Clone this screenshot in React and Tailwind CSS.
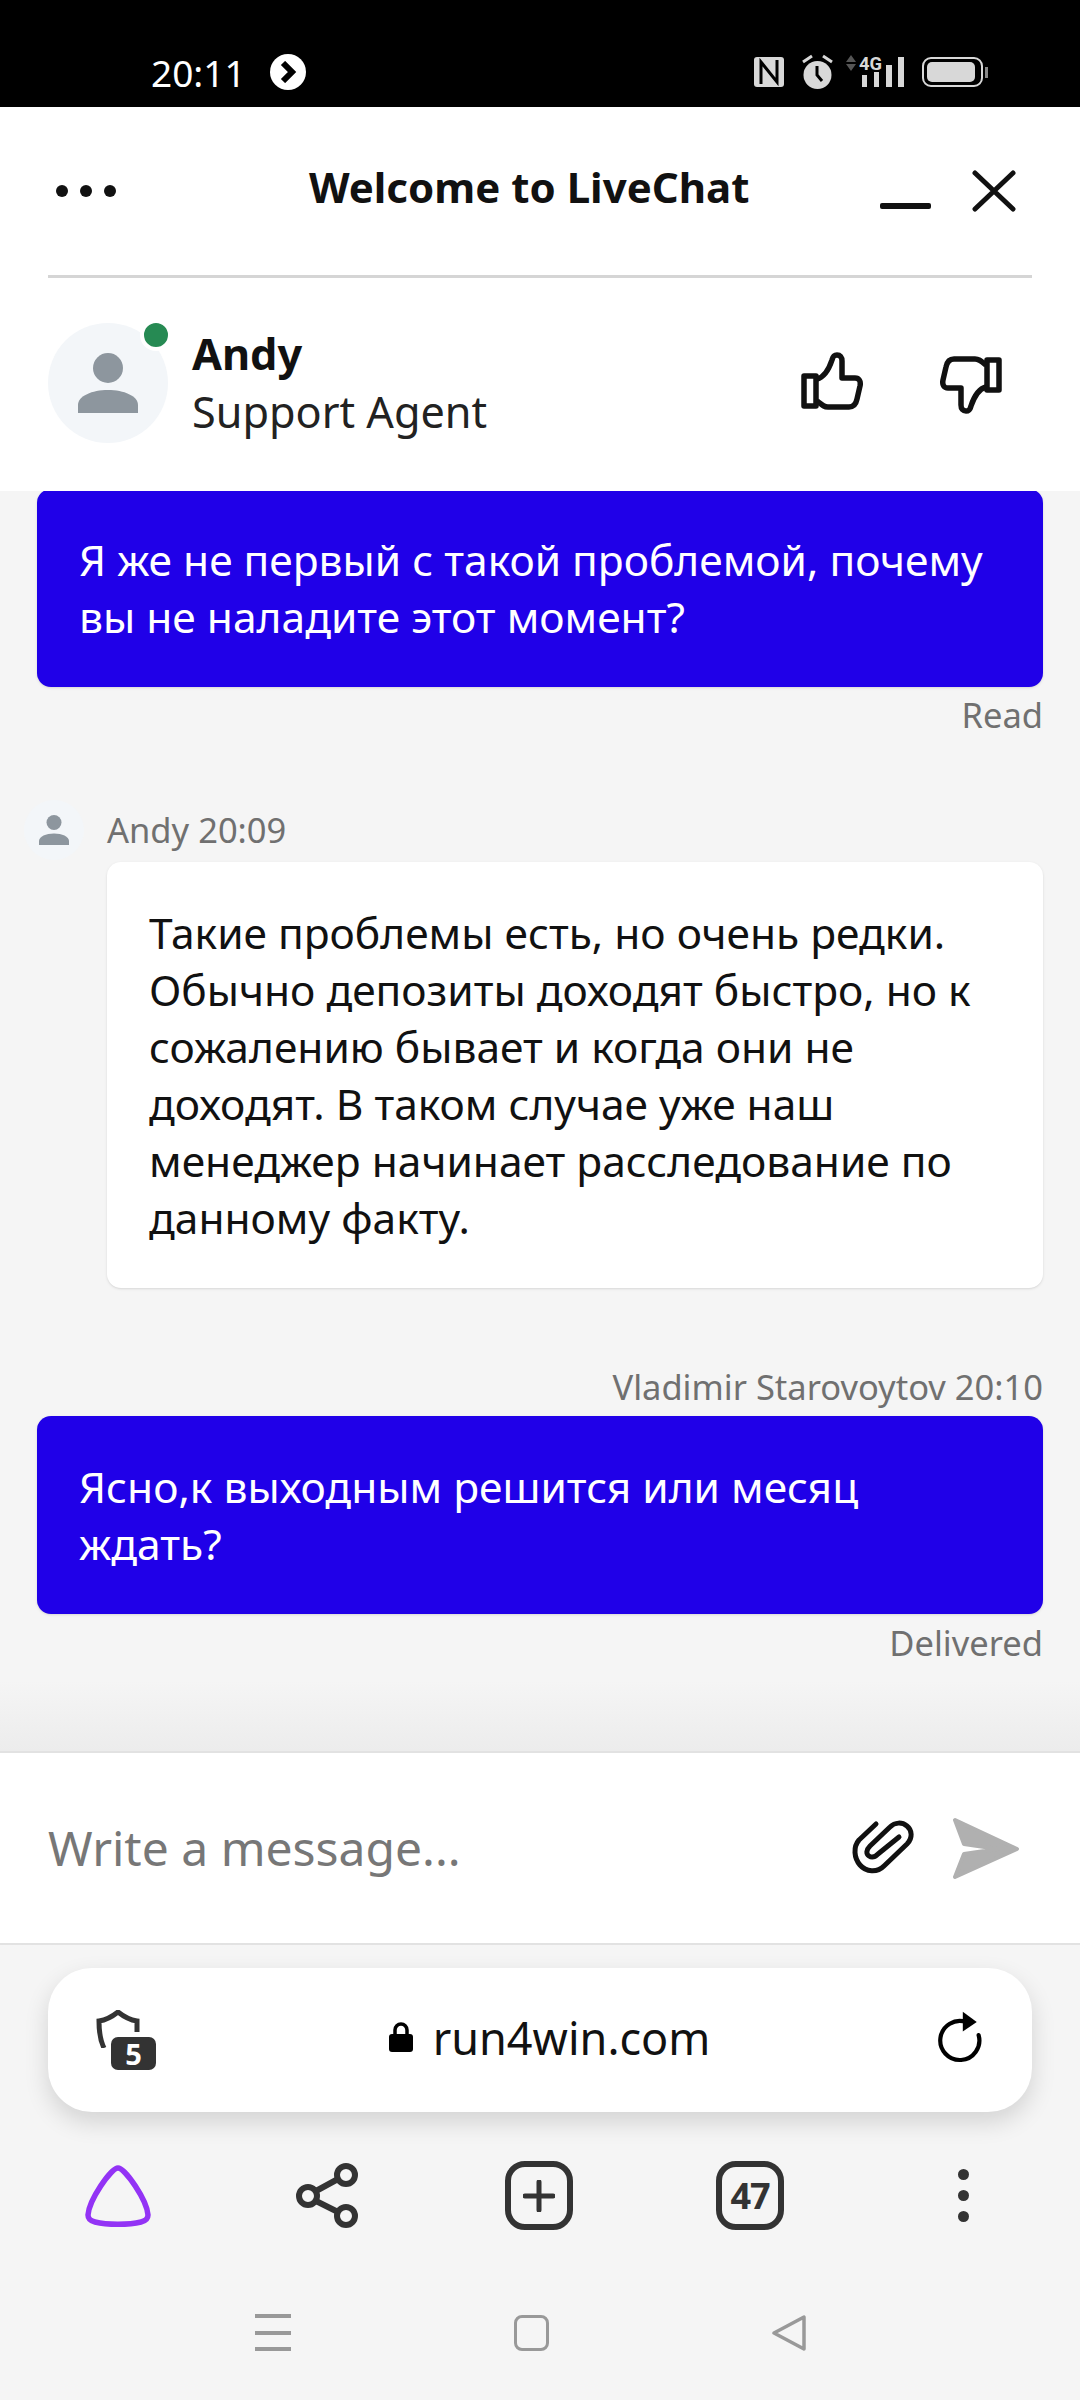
const font = { fontFamily: '"Noto Sans", sans-serif' };

function StatusIcons() {
  return (
    <svg width="150" height="44" viewBox="0 -4 150 44" className="text-[#d8d8d8]">
      <rect x="0" y="3" width="30" height="30" rx="3" fill="currentColor" />
      <path d="M7 30V8l16 20V6" fill="none" stroke="#000" strokeWidth="3" />
      <circle cx="63.5" cy="21" r="14" fill="currentColor" />
      <path d="M63 12v9l5 6" fill="none" stroke="#000" strokeWidth="3" />
      <path d="M49 8l9-6M78 8l-9-6" stroke="currentColor" strokeWidth="3" />
      <path d="M92 8l5-7 5 7zM92 10l5 7 5-7z" fill="#555" />
      <text x="105" y="16" fontSize="19" fontWeight="700" fill="currentColor" fontFamily="Roboto, sans-serif" textLength="23" lengthAdjust="spacingAndGlyphs">4G</text>
      <rect x="108" y="21" width="5" height="12" fill="currentColor" />
      <rect x="120" y="18" width="5" height="15" fill="currentColor" />
      <rect x="132" y="11" width="6" height="22" fill="currentColor" />
      <rect x="144" y="3" width="6" height="30" fill="currentColor" />
    </svg>
  );
}

function Battery() {
  return (
    <div className="flex items-center">
      <div className="w-[61px] h-[30px] rounded-[9px] border-2 border-[#d8d8d8] p-[3px]">
        <div className="w-[48px] h-full rounded-[5px] bg-[#d8d8d8]" />
      </div>
      <div className="w-[3px] h-[11px] bg-[#888] ml-[2px]" />
    </div>
  );
}

function Person({ size }) {
  return (
    <svg width={size} height={size} viewBox="0 0 60 60" fill="#8d969e">
      <circle cx="30" cy="15" r="15" />
      <path d="M0 60V52C0 43 14 37 30 37S60 43 60 52V60Z" />
    </svg>
  );
}

function Thumb({ down }) {
  return (
    <svg width="62" height="58" viewBox="0 0 62 58" fill="none" stroke="#111" strokeWidth="5.5" strokeLinejoin="round" className={down ? 'rotate-180 mt-[4px]' : ''}>
      <path d="M3 24H15V54H3Z" />
      <path d="M16 27C24 25 29 14 31 8C32 4 33 3 36 3C39 3 41 5 41 9V26H54C58 26 60 29 59 34L56 47C55 52 52 55 48 55H27C23 55 21 53 16 49" />
    </svg>
  );
}

function Bubble({ children }) {
  return (
    <div className="bg-[#2000e8] text-white rounded-[14px] px-[42px] py-[42px] text-[42.5px] leading-[57px] shadow-sm">
      {children}
    </div>
  );
}

export default function App() {
  return (
    <div style={font} className="w-[1080px] h-[2400px] flex flex-col bg-[#f5f5f5] overflow-hidden">
      {/* phone status bar */}
      <div className="h-[107px] bg-black flex items-center justify-between pl-[151px] pr-[92px] pt-[37px] shrink-0">
        <div className="flex items-center gap-[24px]">
          <span className="text-white text-[37px] leading-none">20:11</span>
          <div className="w-[36px] h-[36px] rounded-full bg-white flex items-center justify-center">
            <svg width="18" height="22" viewBox="0 0 18 22"><path d="M4 2L13 11L4 20" fill="none" stroke="#000" strokeWidth="6" /></svg>
          </div>
        </div>
        <div className="flex items-center gap-[18px]">
          <StatusIcons />
          <Battery />
        </div>
      </div>

      {/* chat header */}
      <div className="h-[384px] bg-white shrink-0 relative z-10 flex flex-col">
        <div className="h-[171px] mx-[48px] border-b-[3px] border-[#d5d5d5] flex items-center justify-between relative shrink-0">
          <div className="flex gap-[12px] ml-[8px]">
            <div className="w-[12px] h-[12px] rounded-full bg-[#111]" />
            <div className="w-[12px] h-[12px] rounded-full bg-[#111]" />
            <div className="w-[12px] h-[12px] rounded-full bg-[#111]" />
          </div>
          <div className="absolute left-[261px] top-[52px] text-[42px] leading-[56px] font-bold text-[#111]">Welcome to LiveChat</div>
          <div className="flex items-center gap-[41px] mr-[16px]">
            <div className="w-[51px] h-[6px] rounded-[2px] bg-[#111] mt-[30px]" />
            <svg width="44" height="42" viewBox="0 0 44 42"><path d="M3 3L41 39M41 3L3 39" stroke="#111" strokeWidth="5" strokeLinecap="round" /></svg>
          </div>
        </div>
        <div className="flex-1 flex items-center justify-between px-[48px] pb-[3px]">
          <div className="flex items-center gap-[24px]">
            <div className="relative w-[120px] h-[120px] rounded-full bg-[#f3f6f9] flex items-center justify-center">
              <Person size={60} />
              <div className="absolute right-[-4px] top-[-4px] w-[32px] h-[32px] rounded-full bg-[#268a53] border-[4px] border-white" />
            </div>
            <div>
              <div className="text-[43.3px] leading-[58px] font-bold text-[#111]">Andy</div>
              <div className="text-[43.2px] leading-[58px] text-[#222]">Support Agent</div>
            </div>
          </div>
          <div className="flex items-start gap-[77px] mr-[30px]">
            <Thumb />
            <Thumb down />
          </div>
        </div>
      </div>

      {/* messages */}
      <div className="flex-1 relative overflow-hidden flex flex-col justify-end">
        <div className="px-[37px] pb-[85px] text-[#707070]">
          <Bubble>
            Я же не первый с такой проблемой, почему<br />вы не наладите этот момент?
          </Bubble>
          <div className="text-right text-[34.5px] leading-[46px] mt-[5px]">Read</div>

          <div className="flex items-center mt-[62px]">
            <div className="w-[60px] h-[60px] rounded-full bg-[#f3f6f9] flex items-center justify-center mr-[10px] ml-[-13px]">
              <Person size={30} />
            </div>
            <span className="text-[34.5px] leading-[46px] ml-[13px]">Andy 20:09</span>
          </div>
          <div className="ml-[70px] mt-[2px] bg-white rounded-[14px] shadow-sm px-[42px] py-[42px] text-[42.5px] leading-[57px] text-[#111]">
            Такие проблемы есть, но очень редки.<br />
            Обычно депозиты доходят быстро, но к<br />
            сожалению бывает и когда они не<br />
            доходят. В таком случае уже наш<br />
            менеджер начинает расследование по<br />
            данному факту.
          </div>

          <div className="text-right text-[34.5px] leading-[46px] mt-[76px] mb-[6px]">Vladimir Starovoytov 20:10</div>
          <Bubble>
            Ясно,к выходным решится или месяц<br />ждать?
          </Bubble>
          <div className="text-right text-[34.5px] leading-[46px] mt-[6px]">Delivered</div>
        </div>
        <div className="absolute left-0 right-0 bottom-0 h-[70px] bg-gradient-to-b from-transparent to-[#ececec]" />
      </div>

      {/* message input */}
      <div className="h-[194px] bg-white border-y-[2px] border-[#e2e2e2] shrink-0 flex items-center justify-between pl-[48px] pr-[60px]">
        <span className="text-[48px] text-[#777]">Write a message...</span>
        <div className="flex items-center gap-[36px]">
          <svg width="63" height="56" viewBox="0 0 63 56" fill="none" stroke="#111" strokeWidth="5" strokeLinecap="round" strokeLinejoin="round">
            <path d="M24 4L7 20C1 27 2 38 8 45C14 52 25 53 32 46L55 24C61 18 60 10 55 6C50 2 43 2 38 7L18 26C14 30 14 34 17 36C20 38 23 37 26 34L47 17" />
          </svg>
          <svg width="69" height="63" viewBox="0 0 69 63" fill="#b0b0b0" stroke="#b0b0b0" strokeWidth="4" strokeLinejoin="round">
            <path d="M4 3L66 32L4 60L13 37L47 32L13 27Z" />
          </svg>
        </div>
      </div>

      {/* browser bar */}
      <div className="h-[455px] shrink-0 flex flex-col bg-[#f5f5f5]">
        <div className="mt-[23px] mx-[48px] h-[144px] rounded-[44px] bg-white shadow-[0_10px_24px_rgba(0,0,0,0.14)] flex items-center justify-between pl-[48px] pr-[48px] shrink-0">
          <div className="relative w-[60px] h-[60px]">
            <svg width="44" height="38" viewBox="0 0 44 38" fill="none" stroke="#333" strokeWidth="5">
              <path d="M8 38C3 28 3 18 3 11C10 10 17 6 22 2C27 6 34 10 41 11V22" />
            </svg>
            <div className="absolute left-[15px] top-[27px] w-[45px] h-[33px] rounded-[7px] bg-[#333] text-white text-[29px] leading-[33px] font-bold text-center">5</div>
          </div>
          <div className="flex items-center gap-[19px] ml-[6px] mb-[6px]">
            <svg width="26" height="32" viewBox="0 0 26 32">
              <path d="M7 14V9a6 6 0 0 1 12 0v5" fill="none" stroke="#000" strokeWidth="3.5" />
              <rect x="1" y="13" width="24" height="18" rx="3" fill="#000" />
            </svg>
            <span className="text-[45px] leading-none text-[#111]">run4win.com</span>
          </div>
          <svg width="48" height="54" viewBox="0 0 50 58" fill="none" stroke="#000" strokeWidth="4.5" className="mb-[6px]">
            <path d="M32 13A21 21 0 1 0 45 27" strokeLinecap="round" />
            <path d="M28 2L43 13L28 23Z" fill="#000" stroke="none" />
          </svg>
        </div>

        <div className="flex items-center mt-[49px] shrink-0">
          <svg width="66" height="62" viewBox="0 0 66 62" fill="none" stroke="#9333f5" strokeWidth="5.5" className="ml-[85px]">
            <path d="M33 3C40 3 62 35 63 50C63 54 60 56 56 57C44 60 22 60 10 57C6 56 3 54 3 50C4 35 26 3 33 3Z" />
          </svg>
          <svg width="62" height="65" viewBox="0 0 62 65" fill="none" stroke="#333" strokeWidth="6" className="ml-[145px]">
            <circle cx="12" cy="33" r="9" />
            <circle cx="50" cy="12" r="9" />
            <circle cx="50" cy="53" r="9" />
            <path d="M20 28L42 16M20 38L42 49" />
          </svg>
          <div className="ml-[147px] w-[68px] h-[69px] rounded-[20px] border-[6px] border-[#333] flex items-center justify-center">
            <svg width="32" height="32" viewBox="0 0 32 32"><path d="M16 2V30M2 16H30" stroke="#333" strokeWidth="5" strokeLinecap="round" /></svg>
          </div>
          <div className="ml-[143px] w-[68px] h-[69px] rounded-[20px] border-[6px] border-[#333] flex items-center justify-center text-[#333] text-[36px] tracking-[-1px] font-bold leading-none">47</div>
          <div className="ml-[174px] flex flex-col gap-[10px] w-[11px] items-center">
            <div className="w-[11px] h-[11px] rounded-full bg-[#333]" />
            <div className="w-[11px] h-[11px] rounded-full bg-[#333]" />
            <div className="w-[11px] h-[11px] rounded-full bg-[#333]" />
          </div>
        </div>

        {/* android nav */}
        <div className="flex items-center mt-[84px] shrink-0">
          <div className="ml-[255px] flex flex-col gap-[12.5px] w-[36px]">
            <div className="h-[4px] bg-[#999]" />
            <div className="h-[4px] bg-[#999]" />
            <div className="h-[4px] bg-[#999]" />
          </div>
          <div className="ml-[223px] w-[35px] h-[36px] rounded-[8px] border-[3px] border-[#999]" />
          <svg width="36" height="36" viewBox="0 0 36 36" fill="none" stroke="#999" strokeWidth="3.5" strokeLinejoin="round" className="ml-[222px]">
            <path d="M33 2V34L3 18Z" />
          </svg>
        </div>
      </div>
    </div>
  );
}
